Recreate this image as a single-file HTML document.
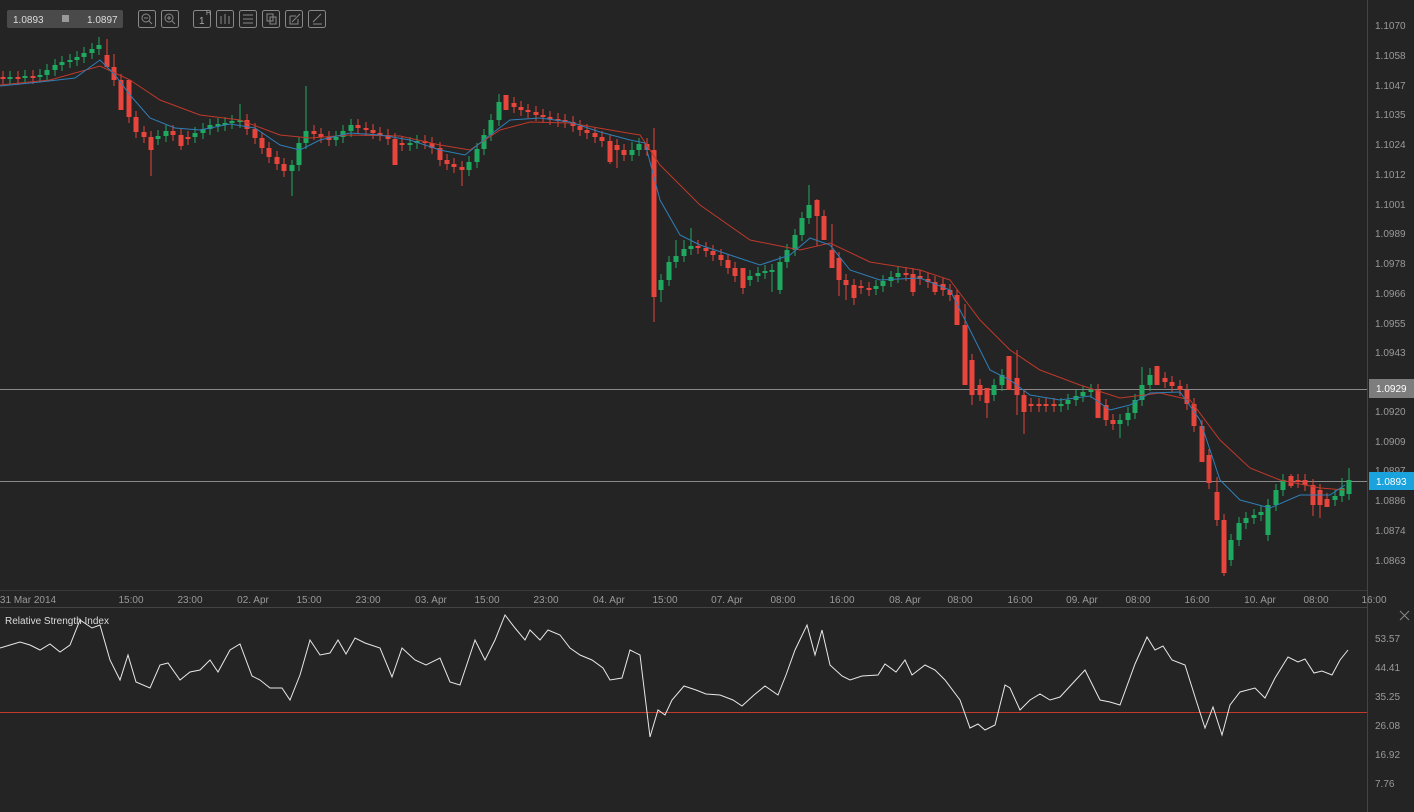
<!DOCTYPE html><html><head><style>
html,body{margin:0;background:#242424;width:1414px;height:812px;overflow:hidden;font-family:"Liberation Sans",sans-serif}
svg{position:absolute;left:0;top:0}
.t{fill:#9a9a9a;font-size:10px}
</style></head><body>
<svg width="1414" height="812" xmlns="http://www.w3.org/2000/svg">
<rect width="1414" height="812" fill="#242424"/>
<line x1="1367.5" y1="0" x2="1367.5" y2="812" stroke="#444"/>
<line x1="0" y1="590.5" x2="1367" y2="590.5" stroke="#3a3a3a"/>
<line x1="0" y1="607.5" x2="1367" y2="607.5" stroke="#444"/>
<line x1="0" y1="389.5" x2="1367" y2="389.5" stroke="#8a8a8a"/>
<line x1="0" y1="481.5" x2="1367" y2="481.5" stroke="#8a8a8a"/>
<line x1="0" y1="712.5" x2="1367" y2="712.5" stroke="#c0392b"/>

<path stroke="#1fa85f" stroke-width="1" fill="none" d="M10 71V84M25 70V83M40 69V82M47 64V81M55 59V76M62 56V71M70 54V68M77 51V66M84 47V63M92 43V59M99 37V55M158 130V145M166 125V142M195 127V143M203 123V139M210 119V135M218 118V132M225 117V131M232 115V129M240 104V128M292 160V196M299 137V171M306 86V149M336 131V146M343 125V143M351 119V137M410 137V151M417 135V149M469 156V176M477 143V168M484 129V155M491 114V141M499 94V126M632 142V161M639 138V156M661 274V302M669 256V286M676 240V268M684 240V262M691 228V255M750 270V286M758 267V282M765 265V279M772 264V292M780 256V294M787 244V268M795 229V256M802 212V241M809 185V224M876 280V295M883 275V292M891 271V287M898 267V283M994 379V401M1002 369V391M1061 398V412M1068 394V410M1076 390V406M1083 386V402M1091 384V398M1120 414V438M1128 407V426M1135 394V419M1142 367V406M1150 368V391M1231 534V566M1239 517V546M1246 512V529M1254 509V524M1261 506V521M1268 499V541M1276 484V511M1283 474V496M1335 490V506M1342 478V502M1349 468V500"/>
<path stroke="#1fa85f" stroke-width="5" fill="none" d="M10 77V79M25 76V78M40 75V77M47 70V75M55 65V70M62 62V65M70 60V62M77 57V60M84 53V57M92 49V53M99 45V49M158 136V139M166 131V136M195 133V137M203 129V133M210 125V129M218 124V126M225 123V125M232 121V123M240 120V122M292 165V171M299 143V165M306 131V143M336 137V140M343 131V137M351 125V131M410 143V145M417 141V143M469 162V170M477 149V162M484 135V149M491 120V135M499 102V120M632 150V155M639 144V150M661 280V290M669 262V280M676 256V262M684 249V256M691 246V249M750 276V280M758 273V276M765 271V273M772 270V272M780 262V290M787 250V262M795 235V250M802 218V235M809 205V218M876 286V289M883 281V286M891 277V281M898 273V277M994 385V395M1002 375V385M1061 404V406M1068 400V404M1076 396V400M1083 392V396M1091 390V392M1120 420V424M1128 413V420M1135 400V413M1142 385V400M1150 375V385M1231 540V560M1239 523V540M1246 518V523M1254 515V518M1261 512V515M1268 505V535M1276 490V505M1283 480V490M1335 496V500M1342 488V496M1349 480V494"/>
<path stroke="#e8453c" stroke-width="1" fill="none" d="M3 71V85M18 71V85M33 70V84M107 39V66M114 54V86M121 74V106M129 94V123M136 111V138M144 126V143M151 131V176M173 125V141M181 129V150M188 131V145M247 114V135M255 123V144M262 132V154M269 142V163M277 151V170M284 158V177M314 125V140M321 128V143M329 131V146M358 119V134M366 122V136M373 124V139M380 127V141M388 129V145M395 133V149M402 137V151M425 135V149M432 137V154M440 142V166M447 154V170M454 158V173M462 161V186M506 96V110M514 97V113M521 101V116M528 104V118M536 106V121M543 109V123M550 111V125M558 113V127M565 114V128M573 116V132M580 120V136M587 124V139M595 127V143M602 131V147M610 135V164M617 139V168M624 144V161M647 138V156M654 128V322M698 240V254M706 242V257M713 245V261M721 249V266M728 254V274M735 262V282M743 270V294M817 199V246M824 210V236M832 224V264M839 252V296M846 274V300M854 279V305M861 280V294M869 282V296M906 267V281M913 268V296M920 270V285M928 273V288M935 276V295M943 278V296M950 284V301M957 289V316M965 304V366M972 354V405M980 379V401M987 388V418M1009 369V384M1017 350V415M1024 389V434M1031 398V412M1039 398V412M1046 398V412M1054 398V412M1098 384V411M1106 399V426M1113 414V430M1157 369V384M1165 372V388M1172 376V392M1180 380V396M1187 384V410M1194 398V432M1202 420V461M1209 449V489M1217 477V526M1224 514V576M1291 474V488M1298 474V488M1305 474V491M1313 479V516M1320 484V518M1327 493V507"/>
<path stroke="#e8453c" stroke-width="5" fill="none" d="M3 77V79M18 77V79M33 76V78M107 55V67M114 67V80M121 80V110M129 80V117M136 117V132M144 132V137M151 137V150M173 131V135M181 135V146M188 137V139M247 120V129M255 129V138M262 138V148M269 148V157M277 157V164M284 164V171M314 131V134M321 134V137M329 137V140M358 125V128M366 128V130M373 130V133M380 133V135M388 135V139M395 139V165M402 143V145M425 141V143M432 143V148M440 148V160M447 160V164M454 164V167M462 167V170M506 95V110M514 103V107M521 107V110M528 110V112M536 112V115M543 115V117M550 117V119M558 119V121M565 120V122M573 122V126M580 126V130M587 130V133M595 133V137M602 137V141M610 141V162M617 145V150M624 150V155M647 144V150M654 150V297M698 246V248M706 248V251M713 251V255M721 255V260M728 260V268M735 268V276M743 268V288M817 200V216M824 216V240M832 250V268M839 258V280M846 280V285M854 285V298M861 286V288M869 288V290M906 273V275M913 274V292M920 276V279M928 279V282M935 282V292M943 284V290M950 290V295M957 295V325M965 325V385M972 360V395M980 385V395M987 388V403M1009 356V390M1017 378V395M1024 395V412M1031 404V406M1039 404V406M1046 404V406M1054 404V406M1098 390V418M1106 405V420M1113 420V424M1157 366V385M1165 378V382M1172 382V386M1180 386V390M1187 390V404M1194 404V426M1202 426V462M1209 455V483M1217 492V520M1224 520V573M1291 476V486M1298 480V482M1305 480V485M1313 485V505M1320 490V505M1327 499V507"/>

<polyline fill="none" stroke="#c0392b" points="0,85 50,80 100,66 130,80 160,100 200,115 240,120 280,135 310,138 350,135 400,136 440,145 470,150 500,130 530,122 570,123 610,130 640,135 660,165 700,205 750,240 800,250 830,243 870,262 920,270 950,280 980,320 1010,350 1040,370 1080,385 1120,398 1160,393 1190,400 1220,440 1250,468 1280,480 1320,488 1345,490"/>
<polyline fill="none" stroke="#2f7fb8" points="0,86 40,82 75,78 100,60 115,75 130,95 150,118 175,128 200,130 230,124 255,128 280,145 300,150 320,140 350,133 380,135 410,140 440,150 465,155 490,135 510,120 540,118 570,122 600,132 630,140 645,143 660,200 680,235 700,245 730,255 760,265 790,255 810,238 830,245 850,270 880,280 920,278 950,290 970,330 990,370 1010,380 1030,395 1060,400 1090,396 1110,410 1130,405 1150,393 1180,392 1200,420 1220,480 1240,500 1270,508 1300,495 1330,495 1345,485"/>
<polyline fill="none" stroke="#e8e8e8" points="0,648 10,645 20,642 30,645 40,650 50,644 60,652 70,645 80,620 92,628 100,625 110,660 120,680 128,655 136,682 150,688 160,665 168,663 180,680 190,672 200,670 210,660 218,672 230,650 240,644 252,676 260,680 270,688 282,688 290,700 300,675 310,640 320,655 330,653 338,640 346,654 355,638 365,643 380,648 392,677 402,648 415,660 426,665 440,658 450,682 460,685 470,655 475,640 485,660 495,640 505,615 515,628 525,640 530,630 540,640 548,630 560,635 570,648 580,655 592,660 603,668 610,680 622,678 630,650 640,655 650,737 658,710 665,715 672,700 684,686 696,690 706,694 720,695 733,700 742,706 754,695 765,686 778,695 786,675 795,650 807,625 815,655 822,630 830,665 842,676 850,680 862,676 878,675 885,664 896,672 905,660 912,675 925,665 935,670 945,680 960,700 970,728 978,724 985,730 995,725 1005,685 1010,688 1020,710 1030,700 1040,694 1050,700 1060,697 1072,684 1085,670 1100,700 1110,702 1120,705 1135,664 1147,637 1155,650 1163,646 1172,660 1185,665 1196,700 1205,728 1213,707 1222,735 1230,705 1240,692 1255,688 1265,698 1275,678 1288,657 1298,662 1305,659 1314,673 1322,671 1332,675 1340,660 1348,650"/>

<g class="t">
<text x="1375" y="29">1.1070</text><text x="1375" y="59">1.1058</text><text x="1375" y="89">1.1047</text><text x="1375" y="118">1.1035</text><text x="1375" y="148">1.1024</text><text x="1375" y="178">1.1012</text><text x="1375" y="208">1.1001</text><text x="1375" y="237">1.0989</text><text x="1375" y="267">1.0978</text><text x="1375" y="297">1.0966</text><text x="1375" y="327">1.0955</text><text x="1375" y="356">1.0943</text><text x="1375" y="415">1.0920</text><text x="1375" y="445">1.0909</text><text x="1375" y="474">1.0897</text><text x="1375" y="504">1.0886</text><text x="1375" y="534">1.0874</text><text x="1375" y="564">1.0863</text>
<text x="1375" y="642">53.57</text><text x="1375" y="671">44.41</text><text x="1375" y="700">35.25</text><text x="1375" y="729">26.08</text><text x="1375" y="758">16.92</text><text x="1375" y="787">7.76</text>
<g text-anchor="middle"><text x="28" y="603">31 Mar 2014</text><text x="131" y="603">15:00</text><text x="190" y="603">23:00</text><text x="253" y="603">02. Apr</text><text x="309" y="603">15:00</text><text x="368" y="603">23:00</text><text x="431" y="603">03. Apr</text><text x="487" y="603">15:00</text><text x="546" y="603">23:00</text><text x="609" y="603">04. Apr</text><text x="665" y="603">15:00</text><text x="727" y="603">07. Apr</text><text x="783" y="603">08:00</text><text x="842" y="603">16:00</text><text x="905" y="603">08. Apr</text><text x="960" y="603">08:00</text><text x="1020" y="603">16:00</text><text x="1082" y="603">09. Apr</text><text x="1138" y="603">08:00</text><text x="1197" y="603">16:00</text><text x="1260" y="603">10. Apr</text><text x="1316" y="603">08:00</text><text x="1374" y="603">16:00</text></g>
</g>
<rect x="1369" y="379" width="45" height="19" fill="#7d7d7d"/><text x="1376" y="392" fill="#fff" font-size="10">1.0929</text>
<rect x="1369" y="472" width="45" height="18" fill="#1aa2dc"/><text x="1376" y="485" fill="#fff" font-size="10">1.0893</text>
<text x="5" y="624" fill="#ddd" font-size="10">Relative Strength Index</text>
<path d="M1400 611l9 9M1409 611l-9 9" stroke="#888"/>
<rect x="7" y="10" width="116" height="18" rx="2" fill="#4a4a4a"/>
<text x="13" y="23" fill="#ddd" font-size="10">1.0893</text><rect x="62" y="15" width="7" height="7" fill="#999"/><text x="87" y="23" fill="#ddd" font-size="10">1.0897</text>
<g fill="none" stroke="#888" stroke-width="1">
<rect x="138.5" y="10.5" width="17" height="17" rx="2"/><rect x="161.5" y="10.5" width="17" height="17" rx="2"/>
<rect x="193.5" y="10.5" width="17" height="17" rx="2"/><rect x="216.5" y="10.5" width="17" height="17" rx="2"/><rect x="239.5" y="10.5" width="17" height="17" rx="2"/><rect x="262.5" y="10.5" width="17" height="17" rx="2"/><rect x="285.5" y="10.5" width="17" height="17" rx="2"/><rect x="308.5" y="10.5" width="17" height="17" rx="2"/>
<circle cx="146" cy="18" r="4"/><path d="M149 21l3 3M144 18h4"/><circle cx="169" cy="18" r="4"/><path d="M172 21l3 3M167 18h4M169 16v4"/>
<path d="M221 16v8M225 14v10M229 16v8M243 15h10M243 19h10M243 23h10M267 14h6v7h-6zM270 17h6v7h-6zM290 16h6M290 16v8h8v-5M292 22l8-8M313 24h9M313 22l8-8"/>
</g>
<text x="199" y="24" fill="#aaa" font-size="10">1</text><text x="206" y="15" fill="#aaa" font-size="7">H</text>
</svg>
</body></html>
